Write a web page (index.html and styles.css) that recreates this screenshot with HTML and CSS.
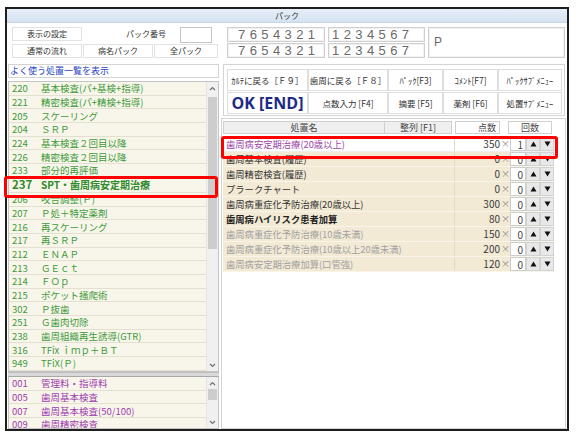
FILE: index.html
```html
<!DOCTYPE html>
<html lang="ja">
<head>
<meta charset="utf-8">
<title>パック</title>
<link rel="stylesheet" href="styles.css">
</head>
<body>
<div class="window">
  <div class="titlebar">パック</div>
  <div class="content">
    <div class="leftcol">
      <div class="ctl-row r1">
        <div class="btn w70">表示の設定</div>
        <div class="lbl">パック番号</div>
        <div class="numbox"></div>
      </div>
      <div class="ctl-row r2">
        <div class="btn w70">通常の流れ</div>
        <div class="btn w70">病名パック</div>
        <div class="btn w63">全パック</div>
      </div>
      <div class="showlist">よく使う処置一覧を表示</div>
      <div class="list main-list">
        <div class="items">
          <div class="item"><span class="code">220</span><span class="name">基本検査(パ+基検+指導)</span></div>
          <div class="item"><span class="code">221</span><span class="name">精密検査(パ+精検+指導)</span></div>
          <div class="item"><span class="code">205</span><span class="name">スケーリング</span></div>
          <div class="item"><span class="code">204</span><span class="name">ＳＲＰ</span></div>
          <div class="item"><span class="code">224</span><span class="name">基本検査２回目以降</span></div>
          <div class="item"><span class="code">226</span><span class="name">精密検査２回目以降</span></div>
          <div class="item"><span class="code">233</span><span class="name">部分的再評価</span></div>
          <div class="item selected"><span class="code">237</span><span class="name">SPT・歯周病安定期治療</span></div>
          <div class="item"><span class="code">206</span><span class="name">咬合調整(Ｐ)</span></div>
          <div class="item"><span class="code">207</span><span class="name">Ｐ処＋特定薬剤</span></div>
          <div class="item"><span class="code">216</span><span class="name">再スケーリング</span></div>
          <div class="item"><span class="code">217</span><span class="name">再ＳＲＰ</span></div>
          <div class="item"><span class="code">212</span><span class="name">ＥＮＡＰ</span></div>
          <div class="item"><span class="code">213</span><span class="name">ＧＥｃｔ</span></div>
          <div class="item"><span class="code">214</span><span class="name">ＦＯｐ</span></div>
          <div class="item"><span class="code">215</span><span class="name">ポケット掻爬術</span></div>
          <div class="item"><span class="code">302</span><span class="name">Ｐ抜歯</span></div>
          <div class="item"><span class="code">251</span><span class="name">Ｇ歯肉切除</span></div>
          <div class="item"><span class="code">238</span><span class="name">歯周組織再生誘導(GTR)</span></div>
          <div class="item"><span class="code">316</span><span class="name">TFix ｉｍｐ＋ＢＴ</span></div>
          <div class="item"><span class="code">949</span><span class="name">TFiX(Ｐ)</span></div>
        </div>
        <div class="scrollbar">
          <div class="arrow"><svg width="7" height="5" viewBox="0 0 7 5"><polyline points="1,4 3.5,1.5 6,4" fill="none" stroke="#707070" stroke-width="1.2"/></svg></div>
          <div class="track"><div class="thumb main-thumb"></div></div>
          <div class="arrow"><svg width="7" height="5" viewBox="0 0 7 5"><polyline points="1,1 3.5,3.5 6,1" fill="none" stroke="#707070" stroke-width="1.2"/></svg></div>
        </div>
      </div>
      <div class="splitter"></div>
      <div class="list sub-list">
        <div class="items">
          <div class="item"><span class="code">001</span><span class="name">管理料・指導料</span></div>
          <div class="item"><span class="code">005</span><span class="name">歯周基本検査</span></div>
          <div class="item"><span class="code">007</span><span class="name">歯周基本検査(50/100)</span></div>
          <div class="item"><span class="code">009</span><span class="name">歯周精密検査</span></div>
        </div>
        <div class="scrollbar">
          <div class="arrow"><svg width="7" height="5" viewBox="0 0 7 5"><polyline points="1,4 3.5,1.5 6,4" fill="none" stroke="#707070" stroke-width="1.2"/></svg></div>
          <div class="track"><div class="thumb sub-thumb"></div></div>
          <div class="arrow"><svg width="7" height="5" viewBox="0 0 7 5"><polyline points="1,1 3.5,3.5 6,1" fill="none" stroke="#707070" stroke-width="1.2"/></svg></div>
        </div>
      </div>
    </div>

    <div class="rightcol">
      <div class="codes">
        <div class="codecol">
          <div class="cbox c1">7654321</div>
          <div class="cbox c1">7654321</div>
        </div>
        <div class="codecol">
          <div class="cbox c2">1234567</div>
          <div class="cbox c2">1234567</div>
        </div>
        <div class="cbox pbox">P</div>
      </div>

      <div class="cmdpanel">
        <div class="cmd">ｶﾙﾃに戻る［Ｆ９］</div>
        <div class="cmd">歯周に戻る［Ｆ８］</div>
        <div class="cmd">ﾊﾟｯｸ[F3]</div>
        <div class="cmd">ｺﾒﾝﾄ[F7]</div>
        <div class="cmd">ﾊﾟｯｸｻﾌﾞﾒﾆｭｰ</div>
        <div class="cmd ok">OK [END]</div>
        <div class="cmd">点数入力 [F4]</div>
        <div class="cmd">摘要 [F5]</div>
        <div class="cmd">薬剤 [F6]</div>
        <div class="cmd">処置ｻﾌﾞﾒﾆｭｰ</div>
      </div>

      <div class="tablearea">
        <div class="thead">
          <div class="th th-name">処置名</div>
          <div class="th th-sort">整列 [F1]</div>
          <div class="th th-pts">点数</div>
          <div class="th th-cnt">回数</div>
        </div>
        <div class="rows">
          <div class="trow current"><div class="td-name">歯周病安定期治療(20歳以上)</div><div class="td-pts">350</div><div class="td-x">×</div><div class="td-in">1</div><div class="td-btn"><svg width="7" height="6" viewBox="0 0 7 6"><polygon points="3.5,0.5 6.5,5.5 0.5,5.5" fill="#111"/></svg></div><div class="td-btn"><svg width="7" height="6" viewBox="0 0 7 6"><polygon points="0.5,0.5 6.5,0.5 3.5,5.5" fill="#111"/></svg></div></div>
          <div class="trow"><div class="td-name">歯周基本検査(履歴)</div><div class="td-pts">0</div><div class="td-x">×</div><div class="td-in">0</div><div class="td-btn"><svg width="7" height="6" viewBox="0 0 7 6"><polygon points="3.5,0.5 6.5,5.5 0.5,5.5" fill="#111"/></svg></div><div class="td-btn"><svg width="7" height="6" viewBox="0 0 7 6"><polygon points="0.5,0.5 6.5,0.5 3.5,5.5" fill="#111"/></svg></div></div>
          <div class="trow"><div class="td-name">歯周精密検査(履歴)</div><div class="td-pts">0</div><div class="td-x">×</div><div class="td-in">0</div><div class="td-btn"><svg width="7" height="6" viewBox="0 0 7 6"><polygon points="3.5,0.5 6.5,5.5 0.5,5.5" fill="#111"/></svg></div><div class="td-btn"><svg width="7" height="6" viewBox="0 0 7 6"><polygon points="0.5,0.5 6.5,0.5 3.5,5.5" fill="#111"/></svg></div></div>
          <div class="trow"><div class="td-name">プラークチャート</div><div class="td-pts">0</div><div class="td-x">×</div><div class="td-in">0</div><div class="td-btn"><svg width="7" height="6" viewBox="0 0 7 6"><polygon points="3.5,0.5 6.5,5.5 0.5,5.5" fill="#111"/></svg></div><div class="td-btn"><svg width="7" height="6" viewBox="0 0 7 6"><polygon points="0.5,0.5 6.5,0.5 3.5,5.5" fill="#111"/></svg></div></div>
          <div class="trow"><div class="td-name">歯周病重症化予防治療(20歳以上)</div><div class="td-pts">300</div><div class="td-x">×</div><div class="td-in">0</div><div class="td-btn"><svg width="7" height="6" viewBox="0 0 7 6"><polygon points="3.5,0.5 6.5,5.5 0.5,5.5" fill="#111"/></svg></div><div class="td-btn"><svg width="7" height="6" viewBox="0 0 7 6"><polygon points="0.5,0.5 6.5,0.5 3.5,5.5" fill="#111"/></svg></div></div>
          <div class="trow strong"><div class="td-name">歯周病ハイリスク患者加算</div><div class="td-pts">80</div><div class="td-x">×</div><div class="td-in">0</div><div class="td-btn"><svg width="7" height="6" viewBox="0 0 7 6"><polygon points="3.5,0.5 6.5,5.5 0.5,5.5" fill="#111"/></svg></div><div class="td-btn"><svg width="7" height="6" viewBox="0 0 7 6"><polygon points="0.5,0.5 6.5,0.5 3.5,5.5" fill="#111"/></svg></div></div>
          <div class="trow dim"><div class="td-name">歯周病重症化予防治療(10歳未満)</div><div class="td-pts">150</div><div class="td-x">×</div><div class="td-in">0</div><div class="td-btn"><svg width="7" height="6" viewBox="0 0 7 6"><polygon points="3.5,0.5 6.5,5.5 0.5,5.5" fill="#111"/></svg></div><div class="td-btn"><svg width="7" height="6" viewBox="0 0 7 6"><polygon points="0.5,0.5 6.5,0.5 3.5,5.5" fill="#111"/></svg></div></div>
          <div class="trow dim"><div class="td-name">歯周病重症化予防治療(10歳以上20歳未満)</div><div class="td-pts">200</div><div class="td-x">×</div><div class="td-in">0</div><div class="td-btn"><svg width="7" height="6" viewBox="0 0 7 6"><polygon points="3.5,0.5 6.5,5.5 0.5,5.5" fill="#111"/></svg></div><div class="td-btn"><svg width="7" height="6" viewBox="0 0 7 6"><polygon points="0.5,0.5 6.5,0.5 3.5,5.5" fill="#111"/></svg></div></div>
          <div class="trow dim"><div class="td-name">歯周病安定期治療加算(口管強)</div><div class="td-pts">120</div><div class="td-x">×</div><div class="td-in">0</div><div class="td-btn"><svg width="7" height="6" viewBox="0 0 7 6"><polygon points="3.5,0.5 6.5,5.5 0.5,5.5" fill="#111"/></svg></div><div class="td-btn"><svg width="7" height="6" viewBox="0 0 7 6"><polygon points="0.5,0.5 6.5,0.5 3.5,5.5" fill="#111"/></svg></div></div>
        </div>
      </div>
    </div>
  </div>
  <div class="highlight hl-list"></div>
  <div class="highlight hl-row"></div>
</div>
</body>
</html>
```

FILE: styles.css
```css
* { box-sizing: border-box; }
html, body { margin: 0; padding: 0; background: #ffffff; }
body {
  font-family: "Noto Sans CJK JP", "Noto Sans", sans-serif;
  color: #333;
  width: 579px;
  height: 436px;
  overflow: hidden;
}
.window {
  position: relative;
  margin: 7px 0 0 5px;
  width: 564px;
  height: 424px;
  border: 2px solid #1e1e1e;
  background: #ffffff;
}
.titlebar {
  height: 14px;
  line-height: 13px;
  font-size: 8px;
  text-align: center;
  color: #333;
  background: linear-gradient(#e6eef8, #d6e3f2);
  border-bottom: 1px solid #c8d4e2;
}
.content {
  display: flex;
  height: 406px;
}
.leftcol {
  width: 213px;
  display: flex;
  flex-direction: column;
}
.ctl-row { display: flex; margin-left: 5px; }
.r1 { margin-top: 4px; height: 16px; align-items: flex-start; }
.r2 { margin-top: 1px; height: 14px; gap: 1px; }
.btn {
  height: 14px;
  border: 1px solid #e2e2e2;
  background: #fff;
  font-size: 8px;
  line-height: 12px;
  text-align: center;
  color: #333;
}
.w70 { width: 70px; }
.w63 { width: 64px; }
.lbl {
  width: 98px;
  height: 14px;
  font-size: 8px;
  line-height: 13px;
  text-align: right;
  padding-right: 14px;
}
.numbox {
  width: 32px;
  height: 16px;
  border: 1px solid #c4c4c4;
  background: #fff;
}
.showlist {
  margin: 6px 0 0 1px;
  width: 211px;
  height: 14px;
  border: 1px solid #d4d4d4;
  font-size: 9px;
  line-height: 12px;
  padding-left: 1px;
  color: #2a46c0;
}
.list {
  margin-left: 1px;
  width: 211px;
  display: flex;
  border: 1px solid #c4c4c4;
  background: #f8f6ea;
  overflow: hidden;
}
.main-list { margin-top: 3px; height: 291px; }
.splitter {
  margin-left: 1px;
  width: 211px;
  height: 4px;
  background: #d9d9d9;
  border-top: 1px solid #bdbdbd;
}
.sub-list { height: 53px; border-top: 1px solid #a8a8a8; }
.items { flex: 1; overflow: hidden; }
.item {
  display: flex;
  align-items: center;
  height: 13.7px;
  border-bottom: 1px solid #e3e0d0;
  font-size: 9.5px;
  line-height: 12px;
  color: #3f9a3c;
  padding-left: 3px;
  white-space: nowrap;
  overflow: hidden;
}
.code { width: 29px; flex: none; }
.item.selected {
  height: 15px;
  font-size: 10px;
  line-height: 13px;
  font-weight: bold;
  color: #2f8a2c;
}
.item.selected .code { font-size: 11.5px; }
.sub-list .item { color: #a03cb0; }
.scrollbar {
  width: 12px;
  flex: none;
  display: flex;
  flex-direction: column;
  background: #f0f0f0;
  border-left: 1px solid #e6e6e6;
}
.arrow {
  height: 12px;
  display: flex;
  align-items: center;
  justify-content: center;
  flex: none;
}
.track { flex: 1; position: relative; }
.thumb {
  margin: 0 1px;
  background: #cdcdcd;
}
.main-thumb { margin-top: 3px; height: 152px; }
.sub-thumb { margin-top: 0; height: 11px; }

.rightcol {
  flex: 1;
  display: flex;
  flex-direction: column;
}
.codes {
  display: flex;
  margin: 4px 0 0 7px;
  height: 31px;
  gap: 3px;
}
.codecol { display: flex; flex-direction: column; gap: 1px; }
.cbox {
  border: 1px solid #cfcfcf;
  box-shadow: inset 0 0 0 1px #f2f2f2;
  background: #fff;
  color: #6a6a6a;
  font-family: "Liberation Sans", "Noto Sans CJK JP", sans-serif;
  font-size: 13px;
  letter-spacing: 4.4px;
  line-height: 13px;
  height: 15px;
}
.c1 { width: 98px; padding-left: 10px; }
.c2 { width: 97px; padding-left: 3px; }
.pbox {
  width: 137px;
  height: 31px;
  padding-left: 5px;
  display: flex;
  align-items: center;
  letter-spacing: 0;
  font-size: 12px;
}
.cmdpanel {
  margin: 6px 0 0 3px;
  width: 342px;
  height: 52px;
  border: 1px solid #d4d4d4;
  padding: 4px 0 0 3px;
  display: grid;
  grid-template-columns: 81px 80px 55px 55px 64px;
  grid-template-rows: 22px 22px;
  gap: 1px 0;
}
.cmd {
  border: 1px solid #dedede;
  background: #fff;
  font-size: 8.5px;
  display: flex;
  align-items: center;
  justify-content: center;
  white-space: nowrap;
  color: #333;
}
.cmd.ok {
  font-family: "Open Sans", "Liberation Sans", sans-serif;
  font-weight: bold;
  font-size: 16px;
  color: #1d2a88;
}
.tablearea {
  margin: 2px 0 0 1px;
  width: 345px;
  height: 311px;
  border: 1px solid #d4d4d4;
  padding: 2px 0 0 1px;
}
.thead { display: flex; height: 13px; }
.th {
  height: 13px;
  border: 1px solid #cfcfcf;
  font-size: 9px;
  line-height: 11px;
  color: #444;
  text-align: center;
}
.th-name { width: 162px; background: #efefef; }
.th-sort { width: 67px; background: #efefef; border-left: none; }
.th-pts { width: 45px; margin-left: 3px; text-align: right; padding-right: 3px; }
.th-cnt { width: 44px; margin-left: 8px; }
.rows { margin-top: 3px; }
.trow {
  display: flex;
  height: 15px;
  width: 331px;
  background: #f2ead5;
  border-bottom: 1px solid #f8f4e8;
  font-size: 9.3px;
  line-height: 14px;
  color: #333;
}
.trow.current { background: #ffffff; border-bottom-color: #eeeeee; }
.trow.current .td-name { color: #9a44a8; }
.trow.strong .td-name { font-weight: bold; color: #222; }
.trow.dim .td-name { color: #a0a0a0; }
.td-name {
  width: 232px;
  padding-left: 3px;
  white-space: nowrap;
  border-right: 1px solid #e2dac4;
}
.td-pts {
  width: 46px;
  text-align: right;
  font-size: 10px;
  color: #3a3a3a;
  padding-right: 1px;
}
.td-x {
  width: 9px;
  text-align: center;
  color: #888;
  font-size: 9px;
}
.td-in {
  width: 16px;
  background: #fff;
  border: 1px solid #cdcdcd;
  text-align: right;
  padding-right: 2px;
  font-size: 10px;
  line-height: 13px;
  color: #444;
}
.td-btn {
  width: 14px;
  background: #e8e8e8;
  border: 1px solid #d2d2d2;
  display: flex;
  align-items: center;
  justify-content: center;
}
.highlight {
  position: absolute;
  border: 3px solid #ff0000;
  border-radius: 3px;
}
.hl-list { left: -3px; top: 167px; width: 214px; height: 22px; }
.hl-row { left: 214px; top: 127px; width: 337px; height: 23px; }
```
